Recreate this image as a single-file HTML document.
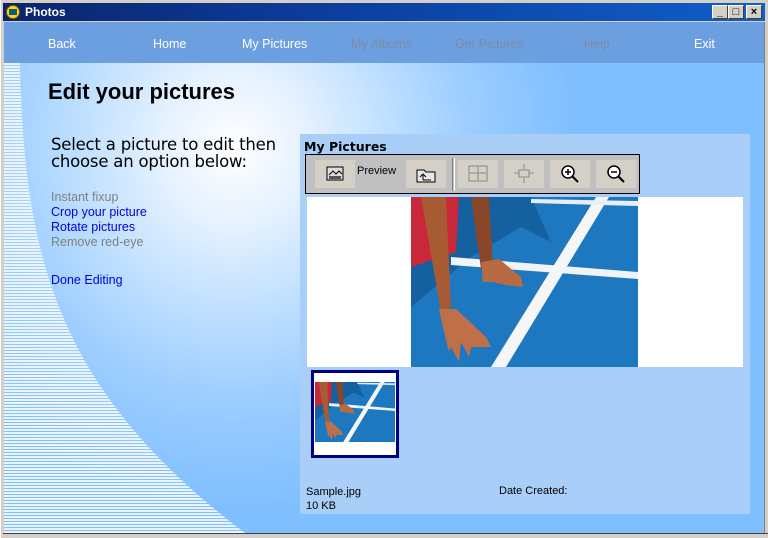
<!DOCTYPE html>
<html><head><meta charset="utf-8"><style>
*{margin:0;padding:0;box-sizing:border-box}
body{width:768px;height:538px;overflow:hidden;background:#d4d0c8;font-family:"Liberation Sans",Arial,sans-serif;position:relative}
.abs{position:absolute}
#title{left:3px;top:3px;width:762px;height:18px;background:linear-gradient(90deg,#0a246a,#0c3c9c 40%,#0f5fc8);color:#fff;font-weight:bold;font-size:12px;line-height:18px;padding-left:22px}
.tb{top:5px;width:16px;height:14px;background:#d4d0c8;border:1px solid;border-color:#fff #404040 #404040 #fff;font-size:11px;line-height:12px;text-align:center;color:#000;font-weight:bold}
#nav{left:4px;top:22px;width:760px;height:41px;background:#6c9fe0}
#nav span{position:absolute;top:15px;font-size:12.5px;color:#fff}
#nav span.d{color:#7d8ca6}
#main{left:4px;top:63px;width:760px;height:470px;background:radial-gradient(ellipse 340px 360px at 230px 85px,#ffffff 0%,#e4f1ff 22%,#c0e0ff 45%,#9ccdff 70%,#80bfff 100%)}
.lnk{font-size:12.5px;color:#0000e0;left:51px}
.gr{font-size:12.5px;color:#808080;left:51px}
#panel{left:300px;top:134px;width:450px;height:380px;background:#a9cef8}
#toolbar{left:305px;top:154px;width:335px;height:40px;background:#c0c0c0;border:1px solid #000}
.btn{position:absolute;top:5px;width:40px;height:28px;background:#d4d0c8}
</style></head><body>
<div id="title" class="abs">Photos</div>
<div class="abs" style="left:6px;top:5px;width:14px;height:14px;border-radius:50%;background:#ffd800;border:1px solid #806000"><div style="margin:3px 2px;width:8px;height:6px;background:#0a5a8a"></div></div>
<div class="abs tb" style="left:712px">_</div>
<div class="abs tb" style="left:728px">□</div>
<div class="abs tb" style="left:746px">×</div>
<div id="nav" class="abs">
<span style="left:44px">Back</span><span style="left:149px">Home</span><span style="left:238px">My Pictures</span>
<span class="d" style="left:347px">My Albums</span><span class="d" style="left:451px">Get Pictures</span><span class="d" style="left:580px">Help</span><span style="left:690px">Exit</span>
</div>
<div id="main" class="abs"></div>
<svg class="abs" style="left:0;top:63px" width="260" height="470">
<defs><pattern id="st" width="10" height="3" patternUnits="userSpaceOnUse"><rect width="10" height="2" fill="#eaf4ff"/></pattern>
<clipPath id="cp"><path d="M0 0 L20 0 C24 200 60 330 245 470 L0 470Z"/></clipPath></defs>
<rect x="4" y="0" width="256" height="470" fill="url(#st)" clip-path="url(#cp)"/>
</svg>
<div class="abs" style="left:48px;top:79px;font-size:22px;font-weight:bold;color:#000;font-family:'Liberation Sans',sans-serif">Edit your pictures</div>
<div class="abs" style="left:51px;top:136px;font-size:16.5px;line-height:17px;color:#000;font-family:'DejaVu Sans',sans-serif;letter-spacing:-0.2px">Select a picture to edit then<br>choose an option below:</div>
<div class="abs gr" style="top:190px">Instant fixup</div>
<div class="abs lnk" style="top:205px">Crop your picture</div>
<div class="abs lnk" style="top:220px">Rotate pictures</div>
<div class="abs gr" style="top:235px">Remove red-eye</div>
<div class="abs lnk" style="top:273px">Done Editing</div>
<div id="panel" class="abs"></div>
<div class="abs" style="left:304px;top:139px;font-size:12.5px;font-weight:bold;font-family:'DejaVu Sans',sans-serif">My Pictures</div>
<div id="toolbar" class="abs">
<div class="btn" style="left:9px"><svg width="40" height="28"><rect x="12" y="7" width="16" height="13" fill="#ddd" stroke="#000"/><path d="M14 15 l4-4 3 3 3-3 3 3" stroke="#000" fill="none"/><rect x="14" y="16" width="12" height="3" fill="#555"/></svg></div>
<div class="abs" style="left:51px;top:10px;font-size:11px">Preview</div>
<div class="btn" style="left:100px"><svg width="40" height="28"><path d="M11 10 h7 l2 2 h9 v10 h-18z" fill="#e8e8e8" stroke="#000"/><path d="M17 20 v-5 M14 17 l3-3 3 3 M17 20 h8" stroke="#000" fill="none"/></svg></div>
<div class="abs" style="left:146px;top:3px;width:3px;height:33px;border-left:1px solid #808080;border-right:1px solid #fff"></div>
<div class="btn" style="left:152px"><svg width="40" height="28"><rect x="11" y="6" width="18" height="15" fill="none" stroke="#888"/><path d="M20 7 v13 M12 13 h16" stroke="#888"/></svg></div>
<div class="btn" style="left:198px"><svg width="40" height="28"><rect x="15" y="10" width="10" height="7" fill="none" stroke="#888"/><path d="M20 4 v5 M20 18 v5 M10 13 h5 M25 13 h5" stroke="#888"/></svg></div>
<div class="btn" style="left:244px"><svg width="40" height="28"><circle cx="18" cy="12" r="6" fill="#fff" stroke="#000" stroke-width="1.5"/><path d="M15 12 h6 M18 9 v6" stroke="#000" stroke-width="1.5"/><path d="M22 16 l6 6" stroke="#000" stroke-width="2"/></svg></div>
<div class="btn" style="left:290px"><svg width="40" height="28"><circle cx="18" cy="12" r="6" fill="#fff" stroke="#000" stroke-width="1.5"/><path d="M15 12 h6" stroke="#000" stroke-width="1.5"/><path d="M22 16 l6 6" stroke="#000" stroke-width="2"/></svg></div>
</div>
<div class="abs" style="left:307px;top:197px;width:436px;height:170px;background:#fff"></div>
<svg class="abs" style="left:411px;top:197px" width="227" height="170" viewBox="0 0 227 170">
<defs><g id="ph">
<rect width="227" height="170" fill="#1e78c0"/>
<path d="M0 110 L60 60 L110 30 L140 45 L120 0 L0 0Z" fill="#15609e"/>
<path d="M40 60 L227 75 L227 82 L40 68Z" fill="#f0f4f8"/>
<path d="M185 0 L198 0 L95 170 L80 170Z" fill="#f4f6f8"/>
<path d="M120 2 L227 4 L227 9 L120 6Z" fill="#e8eef4"/>
<path d="M0 0 L48 0 L45 55 L0 70Z" fill="#c8283a"/>
<path d="M10 0 L35 0 L40 110 L30 115Z" fill="#a85a32"/>
<path d="M28 112 L45 112 L75 140 L80 150 L60 150 L58 160 L50 145 L48 165 L40 150 L38 155 L32 130Z" fill="#c07048"/>
<path d="M60 0 L78 0 L82 70 L70 72Z" fill="#8a4628"/>
<path d="M70 65 L88 62 L110 80 L112 90 L95 88 L82 85 L72 85Z" fill="#b86a42"/>
</g></defs>
<use href="#ph"/>
</svg>
<div class="abs" style="left:311px;top:370px;width:88px;height:88px;border:3px solid #000080;background:#fff"></div>
<svg class="abs" style="left:315px;top:382px" width="80" height="60" viewBox="0 0 227 170" preserveAspectRatio="none"><use href="#ph"/></svg>
<div class="abs" style="left:306px;top:485px;font-size:11px;line-height:14px">Sample.jpg<br>10 KB</div>
<div class="abs" style="left:499px;top:485px;font-size:11px">Date Created:</div>
<div class="abs" style="left:764px;top:22px;width:4px;height:516px;background:#d4d0c8;border-left:1px solid #808080"></div>
<div class="abs" style="left:0;top:533px;width:768px;height:5px;background:#d4d0c8;border-top:1px solid #404040"></div>
<div class="abs" style="left:0;top:0;width:3px;height:538px;background:#d4d0c8;border-left:1px solid #fff"></div>
</body></html>
